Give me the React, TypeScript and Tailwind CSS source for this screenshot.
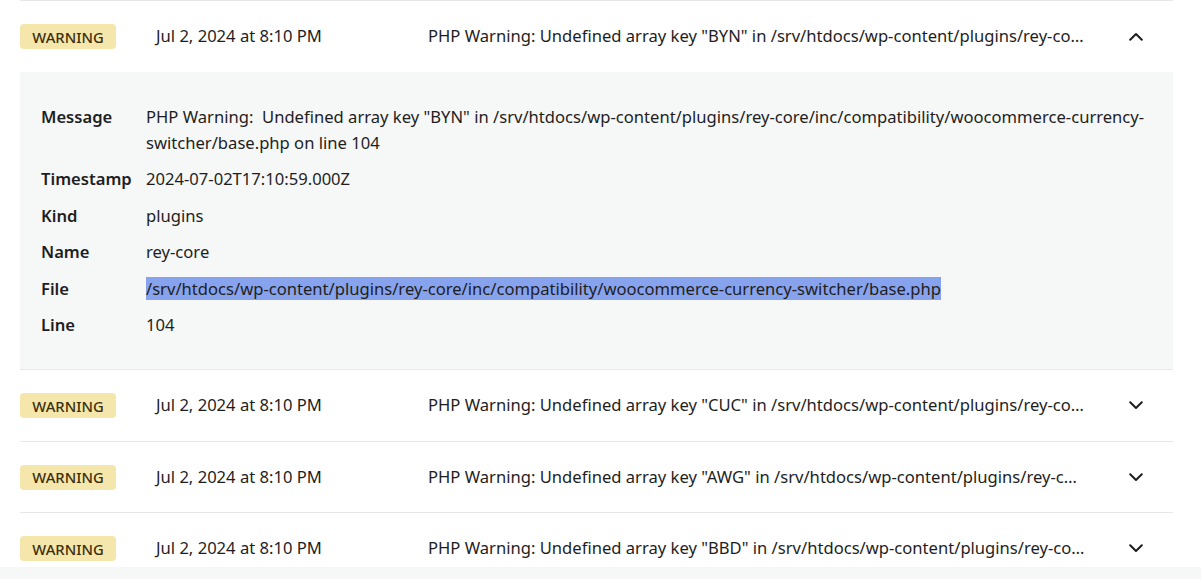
type LogRow = {
  date: string;
  message: string;
  open?: boolean;
};

const rows: LogRow[] = [
  {
    date: 'Jul 2, 2024 at 8:10 PM',
    message:
      'PHP Warning: Undefined array key "BYN" in /srv/htdocs/wp-content/plugins/rey-core/inc/compatibility/woocommerce-currency-switcher/base.php on line 104',
    open: true,
  },
  {
    date: 'Jul 2, 2024 at 8:10 PM',
    message:
      'PHP Warning: Undefined array key "CUC" in /srv/htdocs/wp-content/plugins/rey-core/inc/compatibility/woocommerce-currency-switcher/base.php on line 104',
  },
  {
    date: 'Jul 2, 2024 at 8:10 PM',
    message:
      'PHP Warning: Undefined array key "AWG" in /srv/htdocs/wp-content/plugins/rey-core/inc/compatibility/woocommerce-currency-switcher/base.php on line 104',
  },
  {
    date: 'Jul 2, 2024 at 8:10 PM',
    message:
      'PHP Warning: Undefined array key "BBD" in /srv/htdocs/wp-content/plugins/rey-core/inc/compatibility/woocommerce-currency-switcher/base.php on line 104',
  },
];

const font = { fontFamily: '"Noto Sans", "Open Sans", sans-serif' };

// chevron drawn by hand, the icon sets are too thin/small for this one
function Chevron({ up }: { up?: boolean }) {
  return (
    <svg width="14" height="9" viewBox="0 0 14 9" fill="none" className={up ? 'rotate-180' : ''}>
      <polyline points="1.2,1.3 7,7 12.8,1.3" stroke="#1e1e1e" strokeWidth="2" strokeLinecap="round" strokeLinejoin="round" />
    </svg>
  );
}

function Details() {
  return (
    <div className="bg-[#f6f7f7] pl-[21px] pr-6 pt-8 pb-[31px] text-[16.6px] leading-[26px] text-[#1e1e1e]">
      <div className="grid grid-cols-[105px_1fr] gap-y-[10.5px]">
        <div className="font-semibold">Message</div>
        <div>
          PHP Warning:&nbsp; Undefined array key "BYN" in /srv/htdocs/wp-content/plugins/rey-core/inc/compatibility/woocommerce-currency-switcher/base.php on line 104
        </div>
        <div className="font-semibold">Timestamp</div>
        <div>2024-07-02T17:10:59.000Z</div>
        <div className="font-semibold">Kind</div>
        <div>plugins</div>
        <div className="font-semibold">Name</div>
        <div>rey-core</div>
        <div className="font-semibold">File</div>
        <div>
          <span className="bg-[#87a3ed]">
            /srv/htdocs/wp-content/plugins/rey-core/inc/compatibility/woocommerce-currency-switcher/base.php
          </span>
        </div>
        <div className="font-semibold">Line</div>
        <div>104</div>
      </div>
    </div>
  );
}

export default function App() {
  return (
    <div className="h-[579px] bg-[#f6f7f7] overflow-hidden" style={font}>
      <div className="h-[567px] overflow-hidden bg-white pl-5 pr-7">
        {rows.map((row, i) => (
          <div key={i} className="border-t border-[#e8e8e8]">
            <div className="flex h-[70.5px] items-center pt-[1px] text-[16.6px] text-[#1e1e1e]">
              <div className="w-[136px] shrink-0">
                <span className="inline-flex h-[25px] w-[96px] items-center justify-center rounded bg-[#f5e6ab] text-[14.8px] font-medium text-[#3d2f0b]">
                  WARNING
                </span>
              </div>
              <div className="w-[272px] shrink-0">{row.date}</div>
              <div className="min-w-0 flex-1 truncate">{row.message}</div>
              <div className="flex w-[88px] shrink-0 justify-end pr-[30px]">
                <Chevron up={row.open} />
              </div>
            </div>
            {row.open && <Details />}
          </div>
        ))}
      </div>
    </div>
  );
}
